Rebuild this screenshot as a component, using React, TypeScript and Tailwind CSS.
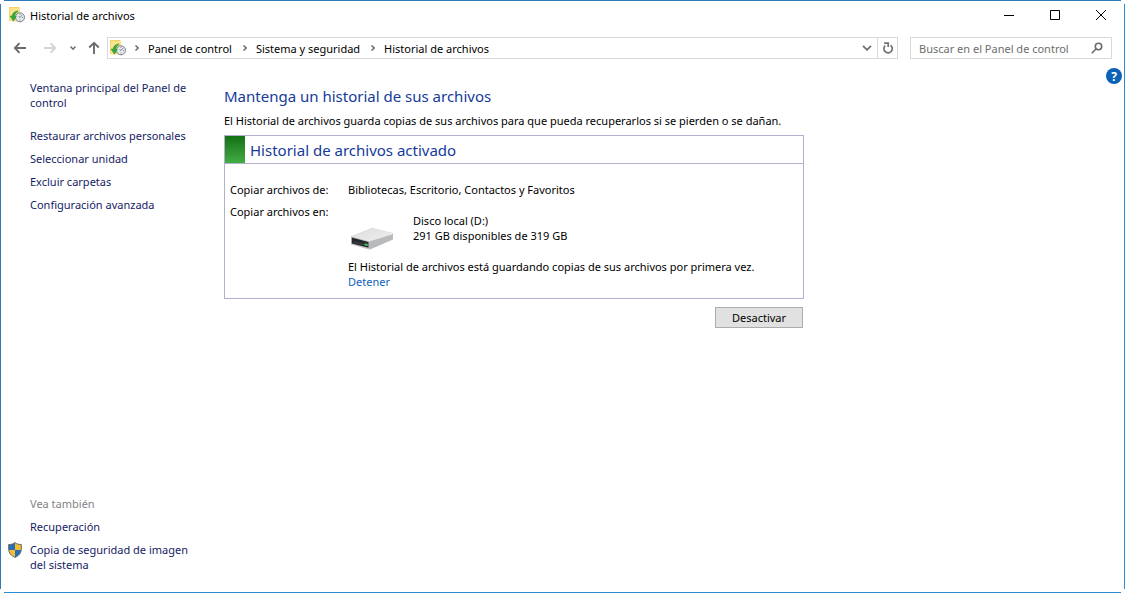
import React from "react";

const tasks = [
  "Restaurar archivos personales",
  "Seleccionar unidad",
  "Excluir carpetas",
  "Configuración avanzada",
];

const crumbs = ["Panel de control", "Sistema y seguridad", "Historial de archivos"];

const HistoryIcon: React.FC = () => (
  <svg className="size-4 shrink-0" viewBox="0 0 16 16" aria-hidden="true">
    <path d="M0 0h10l1 1.500V14H0z" fill="#efcb5e" />
    <path d="M2 .8h9V14.500H1.500L.6 13.500V.8z" fill="#fbe28c" />
    <circle cx="11" cy="10.300" r="4.500" fill="#e4eaee" stroke="#7b8186" strokeWidth="1" />
    <path d="M11 10.500 13 8.200M11 10.500 9.500 9.500M11 7.200v.8M11 13.600v-.8M14 10.500h-.8" fill="none" stroke="#5e6468" strokeWidth=".8" />
    <path d="M8.800 3.800C5.500 4.300 3.400 6.200 3.100 9H1l3.400 5.200L7.400 9.300H5.700c.2-2 1.200-3.600 3.100-4.600z" fill="#35a83a" stroke="#248a2b" strokeWidth=".4" />
  </svg>
);

const ArrowIcon: React.FC<{ className?: string }> = ({ className }) => (
  <svg className={className} width="12" height="12" viewBox="0 0 12 12" fill="none" stroke="currentColor" strokeWidth="1.900" aria-hidden="true">
    <path d="M12 6H1M5.500 1.200 .9 6l4.600 4.800" />
  </svg>
);

const ChevronIcon: React.FC<{ className?: string }> = ({ className }) => (
  <svg className={className} width="6" height="6" viewBox="0 0 6 6" fill="none" stroke="currentColor" strokeWidth="1.500" aria-hidden="true">
    <path d="M1.500 .5 4.200 3 1.500 5.500" />
  </svg>
);

const DriveIcon: React.FC = () => (
  <svg width="44" height="24" viewBox="0 0 44 24" aria-hidden="true">
    <defs>
      <linearGradient id="driveTop" x1="0" y1="0" x2="1" y2="1">
        <stop offset="0" stopColor="#dededf" />
        <stop offset="1" stopColor="#eeeeef" />
      </linearGradient>
    </defs>
    <path d="M0 9.500 20 1.500Q21 1 22 1.300L41 6Q42 6.500 42 7.500v5L19 22.500 0 17z" fill="#b9babc" />
    <path d="M0 9.500 20 1.500Q21 1 22 1.300L41 6Q42 6.500 41 7.500L18 14.500z" fill="url(#driveTop)" />
    <path d="M0 9.500 18 14.500V22.500L0 17.500z" fill="#c7c8ca" />
    <path d="M.8 10.500 17.500 15V20.800L.8 16.500z" fill="#26292b" />
    <path d="M2 14.700 17 18.700" stroke="#4b5053" strokeWidth=".8" />
    <path d="M13.500 16.200 16.800 17V19L13.500 18.200z" fill="#45bf55" />
  </svg>
);

const ShieldIcon: React.FC = () => (
  <svg className="shrink-0" width="14" height="16" viewBox="0 0 14 16" aria-hidden="true">
    <path d="M7 .5C5.500 2 3 2.600 .7 2.500V7c0 4 2.500 6.700 6.300 8.500V8z" fill="#f6bd31" />
    <path d="M7 .5C5.500 2 3 2.600 .7 2.500V8H7z" fill="#256eb9" />
    <path d="M7 .5c1.500 1.500 4 2.100 6.300 2V8H7z" fill="#f6bd31" />
    <path d="M7 8h6.200c-.4 3.500-2.800 6-6.200 7.500z" fill="#256eb9" />
    <path d="M7 .6C5.500 2 3 2.600 .7 2.500V7c0 4 2.500 6.700 6.300 8.400 3.800-1.700 6.300-4.400 6.300-8.400V2.500C11 2.600 8.500 2 7 .6z" fill="none" stroke="#5f6a70" strokeWidth="1" />
  </svg>
);

const TitleBar: React.FC = () => (
  <header className="flex h-[22px] items-center pl-2">
    <HistoryIcon />
    <h1 className="ml-[5px]">Historial de archivos</h1>
    <div className="ml-auto flex h-full items-center">
      <button type="button" aria-label="Minimizar" className="flex h-full w-[46px] items-center justify-center">
        <svg width="10" height="10" viewBox="0 0 10 10" stroke="#000" aria-hidden="true">
          <path d="M0 5.500h10" />
        </svg>
      </button>
      <button type="button" aria-label="Maximizar" className="flex h-full w-[46px] items-center justify-center">
        <svg width="10" height="10" viewBox="0 0 10 10" fill="none" stroke="#000" aria-hidden="true">
          <path d="M.5 .5h9v9h-9z" />
        </svg>
      </button>
      <button type="button" aria-label="Cerrar" className="flex h-full w-[46px] items-center justify-center">
        <svg width="10" height="10" viewBox="0 0 10 10" stroke="#000" aria-hidden="true">
          <path d="M0 0l10 10M10 0 0 10" />
        </svg>
      </button>
    </div>
  </header>
);

const NavBar: React.FC = () => (
  <div className="mt-[11px] flex h-[22px] items-center pr-3">
    <nav aria-label="Navegación" className="flex w-[106px] shrink-0 items-center pl-[13px] text-[#6b6b6b]">
      <button type="button" aria-label="Atrás">
        <ArrowIcon />
      </button>
      <button type="button" aria-label="Adelante" className="ml-[18px] text-[#d4d4d4]">
        <ArrowIcon className="rotate-180" />
      </button>
      <button type="button" aria-label="Ubicaciones recientes" className="ml-[14px]">
        <ChevronIcon className="rotate-90" />
      </button>
      <button type="button" aria-label="Subir" className="ml-3">
        <ArrowIcon className="rotate-90" />
      </button>
    </nav>
    <div className="flex h-full flex-1 items-center border border-[#d9d9d9] pl-[2px]">
      <HistoryIcon />
      {crumbs.map((crumb) => (
        <React.Fragment key={crumb}>
          <ChevronIcon className="mx-2 text-[#6b6b6b]" />
          <a href="#" className="pr-[2px]">{crumb}</a>
        </React.Fragment>
      ))}
      <button type="button" aria-label="Ubicaciones anteriores" className="ml-auto flex h-full w-5 items-center justify-center text-[#707070]">
        <svg width="10" height="6" viewBox="0 0 10 6" fill="none" stroke="currentColor" strokeWidth="1.800" aria-hidden="true">
          <path d="M1 .8 5 4.800 9 .8" />
        </svg>
      </button>
      <button type="button" aria-label="Actualizar" className="flex h-full w-5 items-center justify-center border-l border-[#d9d9d9] text-[#707070]">
        <svg width="12" height="12" viewBox="0 0 12 12" fill="none" stroke="currentColor" strokeWidth="1.700" aria-hidden="true">
          <path d="M8.500 3.200A4.200 4.200 0 1 1 3.200 3.600M2.200 1.200H6.200V5" />
        </svg>
      </button>
    </div>
    <div className="ml-3 flex h-full w-[202px] items-center border border-[#d9d9d9] pr-2 pl-2">
      <input
        type="search"
        aria-label="Buscar en el Panel de control"
        placeholder="Buscar en el Panel de control"
        className="min-w-0 flex-1 outline-none placeholder:text-[#6d6d6d]"
      />
      <svg width="12" height="12" viewBox="0 0 12 12" fill="none" stroke="#6b6b6b" strokeWidth="1.600" aria-hidden="true">
        <circle cx="7.500" cy="4.500" r="3.200" />
        <path d="M5.200 6.800 .8 11.200" />
      </svg>
    </div>
  </div>
);

const Sidebar: React.FC = () => (
  <aside className="flex w-[223px] shrink-0 flex-col pt-[21px] pb-[17px] text-[#151c66]">
    <a href="#" className="mr-6 ml-[29px]">
      Ventana principal del Panel de control
    </a>
    <ul className="mt-[18px] ml-[29px] flex flex-col gap-2">
      {tasks.map((task) => (
        <li key={task}>
          <a href="#" className="block">{task}</a>
        </li>
      ))}
    </ul>
    <div className="mt-auto flex flex-col gap-2 pr-6">
      <h2 className="ml-[29px] text-[#838383]">Vea también</h2>
      <a href="#" className="ml-[29px]">Recuperación</a>
      <a href="#" className="ml-[7px] flex items-start gap-2">
        <ShieldIcon />
        <span>Copia de seguridad de imagen del sistema</span>
      </a>
    </div>
  </aside>
);

const Main: React.FC = () => (
  <main className="flex max-w-[580px] min-w-0 flex-1 flex-col pt-[27px]">
    <h2 className="text-[15px] leading-5 text-[#153a9c]">Mantenga un historial de sus archivos</h2>
    <p className="mt-[7px]">
      El Historial de archivos guarda copias de sus archivos para que pueda recuperarlos si se pierden o se dañan.
    </p>
    <section className="mt-[7px] border border-[#b0b0cf]">
      <div className="flex h-7 items-center border-b border-[#b0b0cf]">
        <div className="h-full w-5 bg-linear-to-b from-[#137013] to-[#43ad43]" />
        <h3 className="ml-[5px] text-[15px] leading-5 text-[#153a9c]">Historial de archivos activado</h3>
      </div>
      <dl className="grid grid-cols-[118px_1fr] gap-y-[7px] pt-[18px] pb-[9px] pl-[5px]">
        <dt>Copiar archivos de:</dt>
        <dd>Bibliotecas, Escritorio, Contactos y Favoritos</dd>
        <dt>Copiar archivos en:</dt>
        <dd>
          <div className="flex items-end gap-[18px] pt-[9px] pl-[3px]">
            <div className="-mb-2">
              <DriveIcon />
            </div>
            <div>
              <p>Disco local (D:)</p>
              <p>291 GB disponibles de 319 GB</p>
            </div>
          </div>
          <p className="mt-4">El Historial de archivos está guardando copias de sus archivos por primera vez.</p>
          <button type="button" className="block text-[#0f62bd]">Detener</button>
        </dd>
      </dl>
    </section>
    <button type="button" className="mt-2 mr-px h-[21px] w-[88px] self-end border border-[#adadad] bg-[#e1e1e1]">
      Desactivar
    </button>
  </main>
);

const App: React.FC = () => {
  return (
    <div className="flex min-h-screen flex-col bg-white font-['Noto_Sans','Open_Sans',sans-serif] text-[11px] leading-[15px] text-black">
      <div className="mx-1 h-px bg-[#2b7cb8]" />
      <div className="my-[3px] flex flex-1 flex-col border-x border-l-[#2b7cb8] border-r-[#2b8bd0]">
        <TitleBar />
        <NavBar />
        <div className="flex flex-1">
          <Sidebar />
          <Main />
          <button
            type="button"
            aria-label="Ayuda"
            className="mt-[9px] mr-[2px] ml-auto flex size-4 items-center justify-center rounded-full bg-[#0b62b5] text-[12px] font-bold text-white"
          >
            ?
          </button>
        </div>
      </div>
      <div className="mx-1 h-px bg-[#2b8bd0]" />
    </div>
  );
};

export default App;
